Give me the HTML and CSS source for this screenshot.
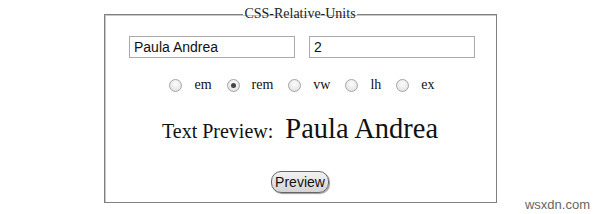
FILE: index.html
```html
<!DOCTYPE html>
<html>

<head>
  <title>CSS Relative Units</title>
  <link rel="stylesheet" href="styles.css">
</head>

<body>
  <fieldset class="units-box">
    <legend>CSS-Relative-Units</legend>

    <div class="inputs-row">
      <input type="text" id="preview-text" value="Paula Andrea">
      <input type="text" id="preview-size" value="2">
    </div>

    <div class="units-row">
      <label><input type="radio" name="unit" value="em"> em</label>
      <label><input type="radio" name="unit" value="rem" checked> rem</label>
      <label><input type="radio" name="unit" value="vw"> vw</label>
      <label><input type="radio" name="unit" value="lh"> lh</label>
      <label><input type="radio" name="unit" value="ex"> ex</label>
    </div>

    <div class="preview-row">
      <span class="preview-label">Text Preview:</span>
      <span class="preview-output" id="preview-output">Paula Andrea</span>
    </div>

    <div class="button-row">
      <button class="preview-button">Preview</button>
    </div>
  </fieldset>

  <div class="watermark">wsxdn.com</div>
</body>

</html>
```

FILE: styles.css
```css
body {
  font-family: "Liberation Serif", serif;
  margin: 0;
  padding: 6px 0 0;
  background-color: #fff;
  color: #111;
  position: relative;
  height: 208px;
}

.units-box {
  width: 393px;
  margin: 0 auto;
  padding: 0;
  border: 1px solid #808080;
  box-shadow: inset 1px 1px 0 #c8c8c8;
  box-sizing: border-box;
  height: 197px;
}

.units-box legend {
  margin: 0 auto;
  padding: 0 1px;
  font-size: 14px;
  color: #222;
}

.inputs-row {
  display: flex;
  justify-content: center;
  gap: 14px;
  margin: 14px 0 0 4px;
}

.inputs-row input[type="text"] {
  width: 166px;
  height: 22px;
  box-sizing: border-box;
  padding: 1px 4px;
  border: 1px solid #a9a9a9;
  font-family: "Liberation Sans", Arial, sans-serif;
  font-size: 14px;
  color: #111;
}

.units-row {
  display: flex;
  justify-content: center;
  gap: 15px;
  margin: 19px 0 0 4px;
  font-size: 14px;
}

.units-row label {
  display: flex;
  align-items: center;
  gap: 12px;
}

.units-row input[type="radio"] {
  appearance: none;
  margin: 0;
  width: 13px;
  height: 13px;
  border-radius: 50%;
  border: 1px solid #a4a4a4;
  background: radial-gradient(circle at 50% 35%, #fdfdfd, #dcdcdc);
  box-sizing: border-box;
  position: relative;
}

.units-row input[type="radio"]:checked::after {
  content: "";
  position: absolute;
  left: 3px;
  top: 3px;
  width: 5px;
  height: 5px;
  border-radius: 50%;
  background: #444;
}

.preview-row {
  display: flex;
  justify-content: center;
  align-items: baseline;
  gap: 12px;
  margin-top: 20px;
}

.preview-label {
  font-size: 20px;
}

.preview-output {
  font-size: 28.5px;
}

.button-row {
  display: flex;
  justify-content: center;
  margin-top: 26px;
}

.preview-button {
  font-family: "Liberation Sans", Arial, sans-serif;
  font-size: 14px;
  padding: 2px 3px;
  border: 1px solid #666;
  border-radius: 10px;
  background: linear-gradient(#f2f2f2, #d4d4d4);
  box-shadow: 1px 1px 1px #999;
  color: #111;
}

.watermark {
  position: absolute;
  right: 10px;
  bottom: 2px;
  font-family: "Liberation Sans", Arial, sans-serif;
  font-size: 13px;
  color: #666;
}
```
